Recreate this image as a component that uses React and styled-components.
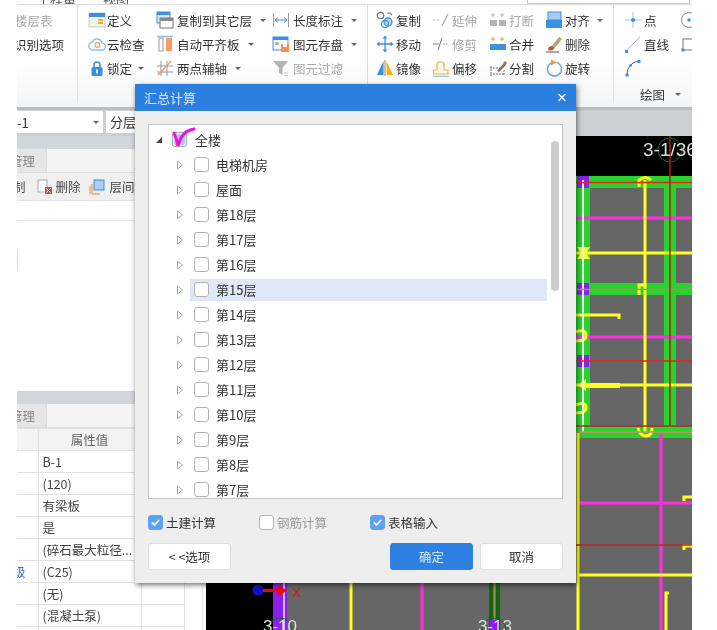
import styled, { createGlobalStyle } from "styled-components";

const GlobalStyle = createGlobalStyle`
  html, body {
    margin: 0;
    padding: 0;
    background: #fff;
  }
  body {
    font-family: "Noto Sans CJK SC", "Liberation Sans", sans-serif;
    color: #333;
  }
`;

const Page = styled.div`
  position: relative;
  width: 717px;
  height: 630px;
  overflow: hidden;
  background: #fff;
  filter: blur(0.45px);
`;

const AppWindow = styled.div`
  width: 675px;
  height: 630px;
  margin-left: 17px;
  overflow: hidden;
  display: flex;
  flex-direction: column;
  background: #fff;
`;

const TabStrip = styled.div`
  height: 5px;
  flex: none;
  display: flex;
  align-items: flex-end;
  gap: 27px;
  padding-left: 20px;
  overflow: hidden;
  font-size: 13px;
  line-height: 13px;
  color: #555;
  border-bottom: 1px solid #ddd;
  box-sizing: border-box;
`;

const TabText = styled.span`
  flex: none;
  margin-bottom: -1px;
`;

const SearchStub = styled.div`
  width: 163px;
  height: 4px;
  margin-left: auto;
  margin-right: 2px;
  border: 1px solid #ccc;
  border-top: 0;
  box-sizing: border-box;
`;

const Ribbon = styled.div`
  height: 102px;
  flex: none;
  display: flex;
  background: linear-gradient(#fff 55%, #f3f4f5);
  font-size: 12.5px;
`;

const RibbonGroup = styled.div`
  width: ${(p) => p.$width}px;
  flex: none;
  box-sizing: border-box;
  padding: 3px 0 0 ${(p) => p.$pad}px;
  margin-bottom: 4px;
  border-right: 1px solid #dcdcdc;
  display: flex;
  flex-direction: column;
  &:last-child {
    border-right: 0;
  }
`;

const ToolGrid = styled.div`
  display: grid;
  grid-template-columns: ${(p) => p.$cols};
  grid-auto-rows: 24px;
`;

const ToolItem = styled.div`
  display: flex;
  align-items: center;
  gap: ${(p) => p.$gap ?? 2}px;
  white-space: nowrap;
  color: ${(p) => (p.$muted ? "#a9a9a9" : "#333")};
  margin-left: ${(p) => p.$shift ?? 0}px;
`;

const IconSlot = styled.svg`
  width: 18px;
  height: 18px;
  flex: none;
`;

const Caret = styled.i`
  width: 0;
  height: 0;
  margin-left: 5px;
  border-left: 3px solid transparent;
  border-right: 3px solid transparent;
  border-top: 3px solid #666;
`;

const GroupLabel = styled.div`
  margin-top: 5px;
  margin-left: 16px;
  display: flex;
  align-items: center;
  gap: 5px;
  font-size: 12.5px;
`;

const SelectorBar = styled.div`
  height: 29px;
  flex: none;
  box-sizing: border-box;
  border-top: 3px solid #bdbdbd;
  padding-top: 1px;
  background: #ccd0d5;
  display: flex;
  gap: 3px;
`;

const Dropdown = styled.div`
  width: 86px;
  height: 22px;
  background: #fff;
  display: flex;
  align-items: center;
  justify-content: space-between;
  font-size: 13px;
  padding-right: 4px;
  box-sizing: border-box;
`;

const ModeBox = styled.div`
  width: 60px;
  height: 22px;
  padding-left: 4px;
  background: #fff;
  font-size: 13px;
  line-height: 22px;
`;

const Workspace = styled.div`
  flex: 1;
  display: flex;
  min-height: 0;
`;

const LeftColumn = styled.div`
  width: 189px;
  flex: none;
  display: flex;
  flex-direction: column;
  background: #fff;
`;

const PanelBand = styled.div`
  height: 13px;
  flex: none;
  background: #d2d5da;
`;

const PanelTabs = styled.div`
  height: 23px;
  flex: none;
  background: #f4f4f4;
  border-bottom: 1px solid #ddd;
`;

const PanelTab = styled.div`
  width: 29px;
  height: 23px;
  background: #e6e6e6;
  border-right: 1px solid #d8d8d8;
  color: #888;
  font-size: 12.5px;
  line-height: 23px;
  text-indent: -7px;
  overflow: hidden;
  white-space: nowrap;
`;

const PanelToolbar = styled.div`
  height: 27px;
  flex: none;
  background: #f0f0f0;
  border-bottom: 1px solid #e3e3e3;
  display: flex;
  align-items: center;
  font-size: 12.5px;
  color: #444;
  white-space: nowrap;
`;

const ToolbarText = styled.span`
  margin-left: ${(p) => p.$left}px;
`;

const ToolbarIcon = styled.svg`
  width: 16px;
  height: 16px;
  flex: none;
  margin-left: ${(p) => p.$left}px;
`;

const FloorList = styled.div`
  height: 190px;
  flex: none;
  box-sizing: border-box;
  padding-top: 19px;
`;

const FloorHeadLine = styled.div`
  height: 1px;
  background: #e4e4e4;
`;

const CellHint = styled.div`
  width: 1px;
  height: 20px;
  margin-top: 29px;
  background: #cfe0f7;
`;

const TableArea = styled.div`
  flex: 1;
  display: flex;
  min-height: 0;
`;

const PropTable = styled.table`
  width: 167px;
  height: 198px;
  flex: none;
  table-layout: fixed;
  border-collapse: collapse;
  font-size: 12.5px;
  color: #444;

  th, td {
    height: 21px;
    padding: 0 0 0 4px;
    border: 1px solid #e1e1e1;
    border-left: 0;
    font-weight: 400;
    text-align: left;
    white-space: nowrap;
    overflow: visible;
  }
  th {
    background: #f3f3f3;
    color: #666;
    text-align: center;
    padding: 0;
  }
`;

const RowLabel = styled.span`
  display: block;
  margin-left: -8px;
  color: #2f6fe0;
`;

const TableGutter = styled.div`
  width: 17px;
  border-right: 1px solid #e6e6e6;
  flex: none;
`;

const CadView = styled.div`
  flex: 1;
  background: #000;
  min-width: 0;
`;

const CadSvg = styled.svg`
  display: block;
  width: 486px;
  height: 494px;
`;

const Dialog = styled.div`
  position: absolute;
  left: 135px;
  top: 84px;
  width: 441px;
  height: 499px;
  background: #eee;
  box-shadow: 1px 2px 5px rgba(0, 0, 0, 0.55);
  display: flex;
  flex-direction: column;
`;

const DialogHeader = styled.div`
  height: 27px;
  flex: none;
  background: #2b7fdf;
  color: #d5e6fa;
  display: flex;
  align-items: center;
  justify-content: space-between;
  padding: 0 9px;
  font-size: 13px;
`;

const CloseMark = styled.span`
  font-size: 17px;
  line-height: 1;
  color: #fff;
  font-family: "Liberation Sans", sans-serif;
`;

const TreeBox = styled.div`
  position: relative;
  height: 375px;
  margin: 13px 13px 0;
  flex: none;
  box-sizing: border-box;
  background: #fff;
  border: 1px solid #c6c6c6;
  padding-top: 2px;
  overflow: hidden;
  font-size: 13px;
`;

const TreeRow = styled.div`
  height: 25px;
  display: flex;
  align-items: center;
  padding-left: ${(p) => (p.$root ? 6 : 27)}px;
  color: #333;
`;

const RowBody = styled.div`
  width: 357px;
  height: 22px;
  box-sizing: border-box;
  padding-left: 4px;
  display: flex;
  align-items: center;
  background: ${(p) => (p.$active ? "#dfe8f7" : "transparent")};
`;

const Arrow = styled.svg`
  width: 8px;
  height: 10px;
  flex: none;
  margin-right: ${(p) => p.$gap}px;
`;

const Box = styled.span`
  position: relative;
  width: 15px;
  height: 15px;
  flex: none;
  box-sizing: border-box;
  border-radius: 3px;
  border: 1px solid ${(p) => (p.$checked ? "#5ea3f3" : "#b4b4b4")};
  background: ${(p) => (p.$checked ? "#5ea3f3" : "#fff")};
  display: inline-flex;
  align-items: center;
  justify-content: center;
`;

const RootBox = styled(Box)`
  border-color: #aaa;
  background: #a9cdf5;
  box-shadow: inset 0 0 0 1px #fff;
`;

const TreeLabel = styled.span`
  margin-left: ${(p) => p.$gap ?? 7}px;
  white-space: nowrap;
`;

const ScribbleTick = styled.svg`
  position: absolute;
  left: 22px;
  top: 1px;
  width: 26px;
  height: 24px;
  overflow: visible;
`;

const ScrollThumb = styled.div`
  position: absolute;
  left: 402px;
  top: 16px;
  width: 8px;
  height: 150px;
  border-radius: 4px;
  background: #cdcdcd;
`;

const OptionRow = styled.div`
  display: grid;
  grid-template-columns: 111px 111px auto;
  margin: 14px 13px 0;
  height: 16px;
  font-size: 12.5px;
`;

const OptionItem = styled.label`
  display: flex;
  align-items: center;
  gap: 3px;
  color: ${(p) => (p.$disabled ? "#999" : "#333")};
`;

const ButtonRow = styled.div`
  display: flex;
  margin: 14px 13px 0;
`;

const DialogButton = styled.button`
  width: 83px;
  height: 27px;
  box-sizing: border-box;
  margin-left: ${(p) => p.$left ?? 0}px;
  border-radius: 3px;
  border: 1px solid ${(p) => (p.$primary ? "#2f80e3" : "#dedede")};
  background: ${(p) => (p.$primary ? "#2f80e3" : "#fff")};
  color: ${(p) => (p.$primary ? "#dceafb" : "#333")};
  font: 400 12.5px "Noto Sans CJK SC", sans-serif;
  padding: 0;
`;

// ---- ribbon icons ----
const B = "#3d8fe0";
const O = "#f4a259";
const G = "#a9a9a9";

const icons = {
  define: (
    <>
      <rect x="1" y="2" width="16" height="14" fill="#f5f3ea" stroke="#c9c9c9" />
      <rect x="1" y="2" width="16" height="4" fill={B} />
      <path d="M10 9h5M10 12h5" stroke="#e8b04a" strokeWidth="2" />
    </>
  ),
  cloud: (
    <>
      <path d="M5 15a4 4 0 0 1-.5-8 5 5 0 0 1 9.5 1 3.5 3.5 0 0 1 0 7z" fill="#fff" stroke="#8fbdec" strokeWidth="1.3" />
      <circle cx="9.5" cy="10" r="2.4" fill="none" stroke={O} strokeWidth="1.2" />
    </>
  ),
  lock: (
    <>
      <path d="M6 9V6a3 3 0 0 1 6 0v3" fill="none" stroke={B} strokeWidth="1.6" />
      <rect x="3.5" y="8" width="11" height="9" rx="1.5" fill={B} />
      <rect x="8.2" y="10.5" width="1.6" height="4" fill="#fff" />
    </>
  ),
  copyLayer: (
    <>
      <rect x="1" y="1" width="13" height="11" fill="#dbe9f8" stroke={B} />
      <rect x="1" y="1" width="13" height="3" fill={B} />
      <rect x="4" y="7" width="13" height="10" fill="#fff" stroke="#777" />
      <rect x="4" y="7" width="13" height="3" fill="#888" />
    </>
  ),
  autoLevel: (
    <>
      <path d="M1 1.5h16" stroke="#8fbdec" strokeWidth="1.6" />
      <rect x="3" y="3" width="4" height="13" fill="#fff" stroke="#9a9a9a" />
      <rect x="10" y="3" width="6" height="13" fill="#f79a63" />
    </>
  ),
  axis: (
    <>
      <path d="M5 2v15M11 2v15M1 7h16M1 13h16" stroke="#999" />
      <path d="M2 16 15 2" stroke="#e89a70" strokeWidth="1.2" />
    </>
  ),
  measure: (
    <>
      <path d="M1.5 2v14M16.5 2v14" stroke="#9a9a9a" />
      <path d="M3 9h12M3 9l3-2.5M3 9l3 2.5M15 9l-3-2.5M15 9l-3 2.5" stroke={B} fill="none" />
    </>
  ),
  save: (
    <>
      <rect x="1" y="2" width="15" height="13" fill="#fff" stroke={B} />
      <rect x="1" y="2" width="15" height="3" fill={B} />
      <rect x="3" y="7" width="4" height="3" fill="#bbb" />
      <rect x="9" y="9" width="8" height="8" fill="#f0904a" />
      <rect x="11" y="9" width="4" height="3" fill="#fff" />
    </>
  ),
  funnel: (
    <>
      <path d="M1 2h15L10.5 9v7L7 14V9z" fill="#b5b5b5" />
      <path d="M12 14h4M12 16.5h4" stroke="#ccc" />
    </>
  ),
  copy: (
    <>
      <circle cx="4.5" cy="4.5" r="3.2" fill="none" stroke="#777" strokeWidth="1.3" />
      <path d="M11 2h3l2 2" fill="none" stroke="#777" strokeWidth="1.2" />
      <circle cx="12" cy="11" r="4" fill="#bcd8f4" stroke={B} strokeWidth="1.3" />
      <circle cx="9" cy="13" r="3.5" fill="none" stroke={B} strokeWidth="1.3" />
    </>
  ),
  move: (
    <>
      <path d="M9 2v14M2 9h14" stroke={B} strokeWidth="1.3" />
      <path d="M9 .5l2.5 3h-5zM9 17.5l2.5-3h-5zM.5 9l3-2.5v5zM17.5 9l-3-2.5v5z" fill={B} />
    </>
  ),
  mirror: (
    <>
      <path d="M1 16 7.5 2v14z" fill={B} />
      <path d="M10.5 2 17 16h-6.5z" fill="#f5b312" />
      <path d="M9 1v16" stroke="#888" />
    </>
  ),
  extend: <path d="M1 9h2M5 9h2M10 15l6-12" stroke={G} strokeWidth="1.2" fill="none" />,
  trim: <path d="M1 9h6M6 15l4-12M11 9h1.5M14 9h1.5" stroke="#8a8a8a" strokeWidth="1.2" fill="none" />,
  offset: (
    <>
      <path d="M1.5 15v-4h3.5V5a2 2 0 0 1 2-2h3a2 2 0 0 1 2 2v6h4v4z" fill="#fff8e6" stroke="#eab04a" strokeWidth="1.2" />
      <path d="M1 17.3h16" stroke="#8fbdec" strokeWidth="1.2" />
    </>
  ),
  breakAt: (
    <>
      <path d="M4 2v4M2 4h4M13 2v4M11 4h4" stroke="#b5b5b5" />
      <rect x="1" y="9" width="7" height="6" fill="#b5b5b5" />
      <rect x="10" y="9" width="7" height="6" fill="#b5b5b5" />
    </>
  ),
  merge: (
    <>
      <path d="M4 2v4M2 4h4M13 2v4M11 4h4" stroke="#f0a030" />
      <rect x="1" y="9" width="16" height="6" fill={B} />
    </>
  ),
  split: (
    <>
      <path d="M1 9h12M1 15h15M2 7v10M15 11v6" stroke="#777" strokeDasharray="2 1" />
      <path d="M8 12 15 4l2 2-7 7z" fill="#8a6a5a" />
      <path d="M14 4l2-2 2 2-1 2z" fill="#e25a3a" />
    </>
  ),
  align: (
    <>
      <rect x="3" y="1" width="13" height="8" fill="#a9cdf1" stroke={B} />
      <rect x="1" y="9" width="16" height="8" fill={B} />
    </>
  ),
  brush: (
    <>
      <path d="M6 12 14 2l3 2-8 10z" fill="#b9a27a" />
      <path d="M3 15c0-3 2-4 4-4l2 2c0 2-2 3-6 2z" fill="#c0522a" />
      <path d="M1 17h13" stroke="#555" />
    </>
  ),
  rotate: (
    <>
      <path d="M7 3.5a7 7 0 1 0 5 0" fill="none" stroke="#6aa6e6" strokeWidth="1.5" />
      <path d="M6 .5l6 3-6 3z" fill="#f09a30" />
    </>
  ),
  point: (
    <>
      <path d="M9 1v16M1 9h16" stroke="#a8c6e6" />
      <circle cx="9" cy="9" r="2" fill={B} />
    </>
  ),
  line: (
    <>
      <path d="M2 16 16 2" stroke="#9cc0e6" />
      <rect x="1" y="15" width="3" height="3" fill={B} />
    </>
  ),
  arc: (
    <>
      <path d="M3 16C3 8 8 3 15 2" fill="none" stroke="#666" />
      <rect x="1.5" y="14.5" width="3" height="3" fill={B} />
      <rect x="13.5" y="1" width="3" height="3" fill={B} />
      <rect x="5.5" y="5" width="2.5" height="2.5" fill={B} />
    </>
  ),
  circle: (
    <>
      <circle cx="9" cy="9" r="7.5" fill="none" stroke="#888" />
      <rect x="7.5" y="7.5" width="3" height="3" fill={B} />
    </>
  ),
  rect: (
    <>
      <rect x="3" y="4" width="15" height="11" fill="none" stroke="#777" />
      <rect x="1.5" y="13.5" width="3" height="3" fill={B} />
    </>
  ),
};

const modelTools = [
  { icon: "define", label: "定义" },
  { icon: "copyLayer", label: "复制到其它层", caret: true },
  { icon: "measure", label: "长度标注", caret: true },
  { icon: "cloud", label: "云检查" },
  { icon: "autoLevel", label: "自动平齐板", caret: true },
  { icon: "save", label: "图元存盘", caret: true },
  { icon: "lock", label: "锁定", caret: true },
  { icon: "axis", label: "两点辅轴", caret: true },
  { icon: "funnel", label: "图元过滤", muted: true },
];

const editTools = [
  { icon: "copy", label: "复制" },
  { icon: "extend", label: "延伸", muted: true },
  { icon: "breakAt", label: "打断", muted: true },
  { icon: "align", label: "对齐", caret: true },
  { icon: "move", label: "移动" },
  { icon: "trim", label: "修剪", muted: true },
  { icon: "merge", label: "合并" },
  { icon: "brush", label: "删除" },
  { icon: "mirror", label: "镜像" },
  { icon: "offset", label: "偏移" },
  { icon: "split", label: "分割" },
  { icon: "rotate", label: "旋转" },
];

const drawTools = [
  { icon: "point", label: "点" },
  { icon: "circle" },
  { icon: "line", label: "直线" },
  { icon: "rect" },
  { icon: "arc" },
];

const floors = ["电梯机房", "屋面", "第18层", "第17层", "第16层", "第15层", "第14层", "第13层", "第12层", "第11层", "第10层", "第9层", "第8层", "第7层"];

const propRows = [
  ["", "B-1"],
  ["", "(120)"],
  ["", "有梁板"],
  ["", "是"],
  ["", "(碎石最大粒径..."],
  ["级", "(C25)"],
  ["", "(无)"],
  ["", "(混凝土泵)"],
  ["", ""],
];

const Tool = ({ tool, gap }) => (
  <ToolItem $muted={tool.muted} $gap={gap}>
    <IconSlot viewBox="0 0 18 18">{icons[tool.icon]}</IconSlot>
    {tool.label && <span>{tool.label}</span>}
    {tool.caret && <Caret />}
  </ToolItem>
);

const TickMark = () => (
  <svg width="11" height="11" viewBox="0 0 11 11">
    <path d="M2 5.5 4.5 8 9 3" fill="none" stroke="#fff" strokeWidth="1.8" />
  </svg>
);

const OpenArrow = ({ gap }) => (
  <Arrow viewBox="0 0 8 10" $gap={gap}>
    <path d="M1.5 1 6.5 5 1.5 9z" fill="#fff" stroke="#aaa" />
  </Arrow>
);

// the drawing behind the dialog, coordinates are page pixels
const CadDrawing = () => (
  <CadSvg viewBox="206 136 486 494">
    <rect x="206" y="136" width="486" height="494" fill="#000" />
    <rect x="287" y="176" width="405" height="454" fill="#666" />
    <g fill="#28d32c">
      <rect x="576" y="176" width="14" height="256" />
      <rect x="664" y="176" width="12" height="252" />
      <rect x="576" y="176" width="116" height="12" />
      <rect x="576" y="283" width="116" height="12" />
      <rect x="576" y="427" width="116" height="11" />
    </g>
    <g fill="#8a1ff0">
      <rect x="577" y="176" width="12" height="12" />
      <rect x="577" y="283" width="12" height="12" />
      <rect x="577" y="355" width="12" height="12" />
    </g>
    <g stroke="#ff2ee6" strokeWidth="3">
      <path d="M576 218H692M576 337H692M579 503H692M661 434V630" />
      <path d="M422 583V630" />
    </g>
    <g stroke="#ffff22" strokeWidth="3" fill="none">
      <path d="M645 180V432M576 253H692M576 385H692M579 575H692M578 433V630M351 583V630" />
      <path d="M576 315H619V319" />
      <path d="M666 630V593H669" />
      <path d="M684 501V497H692M684 550V546H692" />
      <path d="M639 187V180Q645 175 651 180" />
      <path d="M639 295V285H645" />
      <path d="M638 428Q640 436 646 436Q652 436 652 428" />
      <path d="M576 332Q586 328 586 336Q586 341 576 341" />
      <path d="M576 405Q586 401 586 408Q586 413 576 413" />
    </g>
    <path d="M578 385l8-6v4h34v5h-34v3z" fill="#ffff22" />
    <path d="M577 247h13l-4 6 4 6h-13l4-6z" fill="#ffff22" />
    <path d="M583 180V432" stroke="#eee" strokeWidth="2" />
    <g stroke="#e8211c" strokeWidth="1.5">
      <path d="M576 182.5H692M576 361H692" />
    </g>
    <path d="M576 289.5H692" stroke="#b08a70" strokeWidth="1.5" />
    <path d="M576 426H692M576 545H692" stroke="#b52a22" strokeWidth="1.5" />
    <path d="M576 432H692" stroke="#e08070" strokeWidth="1.5" />
    <path d="M670 136V426" stroke="#a52018" strokeWidth="1.5" />
    <circle cx="670" cy="150" r="12" fill="none" stroke="#0f6b18" />
    <text x="643" y="156" fontSize="19" fill="#ddd" fontFamily="Liberation Sans">3-1/36</text>

    <rect x="273" y="583" width="14" height="47" fill="#8a1ff0" />
    <path d="M284 583V630" stroke="#eee" strokeWidth="1.5" />
    <rect x="489" y="583" width="11" height="47" fill="#0b6b12" />
    <path d="M494.5 583V630" stroke="#d08060" strokeWidth="2" />
    <rect x="490" y="620" width="9" height="10" fill="#8a1ff0" />
    <circle cx="280" cy="630" r="12" fill="none" stroke="#0f6b18" />
    <circle cx="494" cy="630" r="12" fill="none" stroke="#0f6b18" />
    <text x="263" y="632" fontSize="17" fill="#ddd" fontFamily="Liberation Sans">3-10</text>
    <text x="478" y="632" fontSize="17" fill="#ddd" fontFamily="Liberation Sans">3-13</text>
    <circle cx="258" cy="590" r="5.5" fill="#1010c8" />
    <path d="M263 589h15v-4l9 5.5-9 5.5v-4h-15z" fill="#f00" />
    <text x="292" y="597" fontSize="13" fill="#f00" fontFamily="Liberation Sans">X</text>
  </CadSvg>
);

const App = () => {
  return (
    <Page>
      <GlobalStyle />
      <AppWindow>
        <TabStrip>
          <TabText>工程量</TabText>
          <TabText>视图</TabText>
          <SearchStub />
        </TabStrip>
        <Ribbon>
          <RibbonGroup $width={61} $pad={0}>
            <ToolGrid $cols="1fr">
              <ToolItem $muted $shift={-2}>楼层表</ToolItem>
              <ToolItem $shift={-3}>识别选项</ToolItem>
            </ToolGrid>
          </RibbonGroup>
          <RibbonGroup $width={290} $pad={10}>
            <ToolGrid $cols="68px 116px auto">
              {modelTools.map((tool) => (
                <Tool key={tool.icon} tool={tool} gap={tool.icon === "define" || tool.icon === "cloud" || tool.icon === "lock" ? 1 : 3} />
              ))}
            </ToolGrid>
          </RibbonGroup>
          <RibbonGroup $width={246} $pad={8}>
            <ToolGrid $cols="56px 57px 56px auto">
              {editTools.map((tool) => (
                <Tool key={tool.icon} tool={tool} />
              ))}
            </ToolGrid>
          </RibbonGroup>
          <RibbonGroup $width={78} $pad={10}>
            <ToolGrid $cols="56px auto">
              {drawTools.map((tool) => (
                <Tool key={tool.icon} tool={tool} />
              ))}
            </ToolGrid>
            <GroupLabel>
              绘图
              <Caret />
            </GroupLabel>
          </RibbonGroup>
        </Ribbon>
        <SelectorBar>
          <Dropdown>
            <span>-1</span>
            <Caret />
          </Dropdown>
          <ModeBox>分层</ModeBox>
        </SelectorBar>
        <Workspace>
          <LeftColumn>
            <PanelBand />
            <PanelTabs>
              <PanelTab>管理</PanelTab>
            </PanelTabs>
            <PanelToolbar>
              <ToolbarText $left={-4}>制</ToolbarText>
              <ToolbarIcon $left={11} viewBox="0 0 16 16">
                <rect x="1" y="1" width="9" height="12" fill="#fff" stroke="#aaa" />
                <rect x="8" y="8" width="7" height="7" fill="#e0443c" />
                <path d="M9.5 9.5l4 4M13.5 9.5l-4 4" stroke="#fff" />
              </ToolbarIcon>
              <ToolbarText $left={3}>删除</ToolbarText>
              <ToolbarIcon $left={8} viewBox="0 0 16 16">
                <rect x="5" y="1" width="10" height="10" fill="#a9cdf8" stroke={B} />
                <path d="M3 5v10h8M1 7v8" fill="none" stroke={O} strokeWidth="1.3" />
              </ToolbarIcon>
              <ToolbarText $left={5}>层间</ToolbarText>
            </PanelToolbar>
            <FloorList>
              <FloorHeadLine />
              <CellHint />
            </FloorList>
            <PanelBand />
            <PanelTabs>
              <PanelTab>管理</PanelTab>
            </PanelTabs>
            <TableArea>
              <PropTable>
                <colgroup>
                  <col style={{ width: 21 }} />
                  <col style={{ width: 103 }} />
                  <col style={{ width: 43 }} />
                </colgroup>
                <thead>
                  <tr>
                    <th />
                    <th>属性值</th>
                    <th />
                  </tr>
                </thead>
                <tbody>
                  {propRows.map(([name, value], index) => (
                    <tr key={index}>
                      <td>{name && <RowLabel>{name}</RowLabel>}</td>
                      <td>{value}</td>
                      <td />
                    </tr>
                  ))}
                </tbody>
              </PropTable>
              <TableGutter />
            </TableArea>
          </LeftColumn>
          <CadView>
            <CadDrawing />
          </CadView>
        </Workspace>
      </AppWindow>

      <Dialog>
        <DialogHeader>
          <span>汇总计算</span>
          <CloseMark>×</CloseMark>
        </DialogHeader>
        <TreeBox>
          <TreeRow $root>
            <Arrow viewBox="0 0 8 10" $gap={9}>
              <path d="M7 2v6H1z" fill="#444" />
            </Arrow>
            <RootBox />
            <TreeLabel $gap={8}>全楼</TreeLabel>
          </TreeRow>
          <ScribbleTick viewBox="0 0 26 24">
            <path d="M3 7 Q6 14 7 20 Q9 11 15 6 Q18 4 23 3" fill="none" stroke="#f012d8" strokeWidth="3" strokeLinecap="round" />
          </ScribbleTick>
          {floors.map((floor) => (
            <TreeRow key={floor}>
              <OpenArrow gap={6} />
              <RowBody $active={floor === "第15层"}>
                <Box />
                <TreeLabel>{floor}</TreeLabel>
              </RowBody>
            </TreeRow>
          ))}
          <ScrollThumb />
        </TreeBox>
        <OptionRow>
          <OptionItem>
            <Box $checked><TickMark /></Box>
            土建计算
          </OptionItem>
          <OptionItem $disabled>
            <Box />
            钢筋计算
          </OptionItem>
          <OptionItem>
            <Box $checked><TickMark /></Box>
            表格输入
          </OptionItem>
        </OptionRow>
        <ButtonRow>
          <DialogButton>&lt; &lt;选项</DialogButton>
          <DialogButton $primary $left={159}>确定</DialogButton>
          <DialogButton $left={7}>取消</DialogButton>
        </ButtonRow>
      </Dialog>
    </Page>
  );
};

export default App;
